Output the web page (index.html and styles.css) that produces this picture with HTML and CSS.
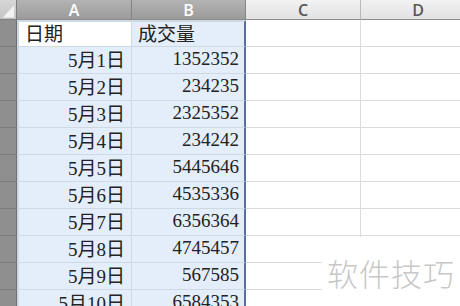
FILE: index.html
```html
<!DOCTYPE html>
<html>
<head>
  <meta charset="utf-8">
  <title>成交量</title>
  <link rel="stylesheet" href="styles.css">
</head>
<body>
  <div class="sheet">
    <!-- column headers -->
    <div class="corner">
      <svg width="17" height="20" viewBox="0 0 17 20"><polygon points="15,5 15,18 3,18" fill="#f2f2f2"/></svg>
    </div>
    <div class="col-head on">A</div>
    <div class="col-head on">B</div>
    <div class="col-head">C</div>
    <div class="col-head">D</div>

    <div class="row-head">1</div>
    <div class="cell text active sel-l sel-t">日期</div>
    <div class="cell text pick sel-r sel-t">成交量</div>
    <div class="cell"></div><div class="cell"></div>

    <div class="row-head">2</div>
    <div class="cell pick sel-l">5月1日</div>
    <div class="cell pick sel-r num">1352352</div>
    <div class="cell"></div><div class="cell"></div>

    <div class="row-head">3</div>
    <div class="cell pick sel-l">5月2日</div>
    <div class="cell pick sel-r num">234235</div>
    <div class="cell"></div><div class="cell"></div>

    <div class="row-head">4</div>
    <div class="cell pick sel-l">5月3日</div>
    <div class="cell pick sel-r num">2325352</div>
    <div class="cell"></div><div class="cell"></div>

    <div class="row-head">5</div>
    <div class="cell pick sel-l">5月4日</div>
    <div class="cell pick sel-r num">234242</div>
    <div class="cell"></div><div class="cell"></div>

    <div class="row-head">6</div>
    <div class="cell pick sel-l">5月5日</div>
    <div class="cell pick sel-r num">5445646</div>
    <div class="cell"></div><div class="cell"></div>

    <div class="row-head">7</div>
    <div class="cell pick sel-l">5月6日</div>
    <div class="cell pick sel-r num">4535336</div>
    <div class="cell"></div><div class="cell"></div>

    <div class="row-head">8</div>
    <div class="cell pick sel-l">5月7日</div>
    <div class="cell pick sel-r num">6356364</div>
    <div class="cell"></div><div class="cell"></div>

    <div class="row-head">9</div>
    <div class="cell pick sel-l">5月8日</div>
    <div class="cell pick sel-r num">4745457</div>
    <div class="cell"></div><div class="cell"></div>

    <div class="row-head">10</div>
    <div class="cell pick sel-l">5月9日</div>
    <div class="cell pick sel-r num">567585</div>
    <div class="cell"></div><div class="cell"></div>

    <div class="row-head">11</div>
    <div class="cell pick sel-l">5月10日</div>
    <div class="cell pick sel-r num">6584353</div>
    <div class="cell"></div><div class="cell"></div>
  </div>

  <div class="mark">软件技巧</div>
</body>
</html>
```

FILE: styles.css
```css
/* worksheet grid */
html, body {
  margin: 0;
  height: 100%;
  overflow: hidden;
  background: #fff;
}
body {
  position: relative;
  font-family: "Liberation Serif", "Noto Sans CJK SC", serif;
}
.sheet {
  display: grid;
  grid-template-columns: 40px 115px 114px 115px 115px;
  grid-template-rows: 20px;
  grid-auto-rows: 27px;
  margin-left: -23px;
}
.sheet > div {
  box-sizing: border-box;
}

/* headers */
.corner {
  background: linear-gradient(#d6d6d6, #c4c4c4);
  border-right: 1px solid #7d7d7d;
  border-bottom: 1px solid #7d7d7d;
  display: flex;
  justify-content: flex-end;
  padding-left: 23px;
}
.corner svg {
  display: block;
}
.col-head {
  background: linear-gradient(#f2f2f2, #e2e2e2);
  border-right: 1px solid #b9b9b9;
  border-bottom: 1px solid #8c8c8c;
  color: #565656;
  font-family: "Open Sans", "Liberation Sans", sans-serif;
  font-weight: 600;
  font-size: 16px;
  display: flex;
  align-items: center;
  justify-content: center;
  line-height: 18px;
}
.col-head.on {
  background: linear-gradient(#b3b3b3, #9b9b9b);
  border-right-color: #858585;
  color: #fff;
}
.row-head {
  background: #8f8f8f;
  border-right: 1px solid #6f6f6f;
  border-bottom: 1px solid #7c7c7c;
  color: #b9b9b9;
  font-family: "Open Sans", "Liberation Sans", sans-serif;
  font-weight: 600;
  font-size: 16px;
  display: flex;
  align-items: center;
  justify-content: flex-end;
  padding-right: 16px;
}

/* cells */
.cell {
  border-right: 1px solid #dadada;
  border-bottom: 1px solid #dadada;
  font-size: 19px;
  color: #222;
  display: flex;
  align-items: center;
  justify-content: flex-end;
  padding: 0 6px 3px 6px;
  white-space: nowrap;
}
.cell.text {
  justify-content: flex-start;
  font-family: "Noto Sans CJK SC", sans-serif;
  font-size: 19px;
}
.cell.pick {
  background: #e4eefa;
  border-color: #cfd9e4;
}
.cell.active {
  background: #fff;
  border-color: #cfd9e4;
}
.cell.num {
  padding-right: 5px;
}

/* selection outline around A:B */
.sel-l {
  border-left: 2px solid #56709a;
}
.sel-r {
  border-right: 2px solid #56709a !important;
}
.sel-t {
  border-top: 2px solid #56709a;
}

/* logo overlay in the corner */
.mark {
  position: absolute;
  left: 322px;
  top: 237px;
  right: 0;
  bottom: 0;
  background: #fff;
  color: #c8c8c8;
  font-family: "Noto Sans CJK SC", sans-serif;
  font-weight: 300;
  font-size: 31px;
  line-height: 1;
  padding: 20px 0 0 5px;
  letter-spacing: 1px;
}
```
